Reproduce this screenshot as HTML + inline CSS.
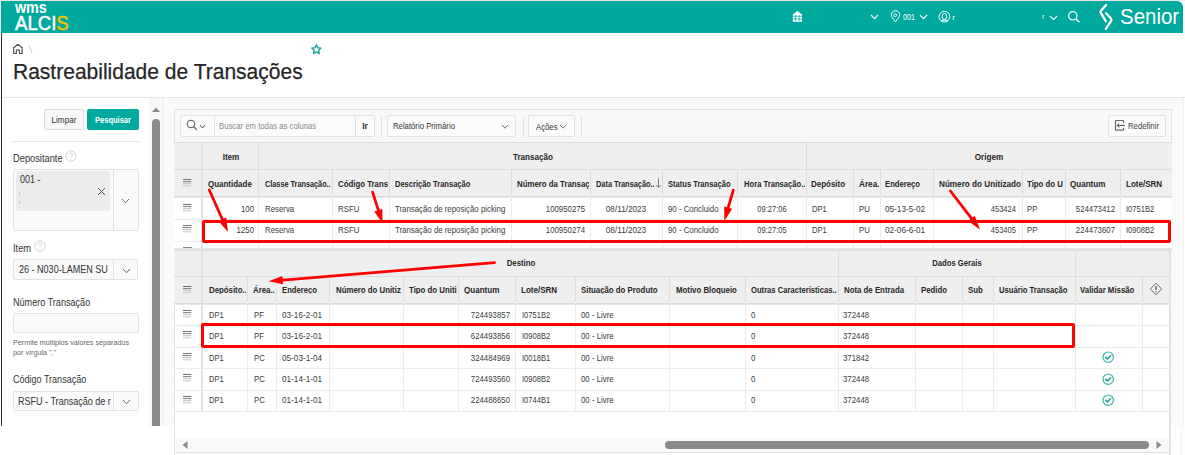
<!DOCTYPE html>
<html><head><meta charset="utf-8"><style>
html,body{margin:0;padding:0;}
body{width:1185px;height:455px;position:relative;overflow:hidden;background:#fff;font-family:"Liberation Sans", sans-serif;}
body>div, body>div>div{position:absolute;}
.t{position:absolute;white-space:nowrap;line-height:1;}
</style></head><body>
<div style="left:0px;top:0px;width:1185px;height:1px;background:#e8e8e8"></div>
<div style="left:1px;top:1px;width:1182px;height:32px;background:#00a99d;border-top-right-radius:6px"></div>
<div style="left:1px;top:33px;width:1px;height:393px;background:#2b2b2b"></div>
<div class="t" style="left:15.00px;top:-0.24px;font-size:16px;color:#fff;font-weight:bold;transform:scaleX(0.9);transform-origin:0 0;letter-spacing:-0.2px">wms</div>
<div class="t" style="left:14.70px;top:12.97px;font-size:20px;color:#fff;font-weight:normal;transform:scaleX(0.93);transform-origin:0 0;-webkit-text-stroke:0.5px #fff">ALCI<span style="color:#f6c200;-webkit-text-stroke:0.5px #f6c200">S</span></div>
<svg style="position:absolute;left:792px;top:10px;" width="11" height="12" viewBox="0 0 11 12"><path d="M5.4 1 L10 4.5 V11.7 H0.8 V4.5 Z" fill="#fff"/><path d="M0.8 6.3 H10 M0.8 9 H10 M3.6 5 V11 M7.2 5 V11" stroke="#00a99d" stroke-width="0.7"/></svg>
<svg style="position:absolute;left:869.5px;top:14.2px;" width="9" height="5.6" viewBox="0 0 9 5.6"><path d="M1 1 L4.5 4.6 L8 1" fill="none" stroke="#fff" stroke-width="1.1"/></svg>
<svg style="position:absolute;left:890px;top:10px;" width="11" height="13" viewBox="0 0 11 13"><path d="M5.5 11.8 C3 8.6 1.3 6.6 1.3 4.9 A4.2 4.2 0 0 1 9.7 4.9 C9.7 6.6 8 8.6 5.5 11.8 Z" fill="none" stroke="#fff" stroke-width="1"/><circle cx="5.3" cy="5.2" r="1.4" fill="none" stroke="#fff" stroke-width="0.9"/></svg>
<div class="t" style="left:903.00px;top:12.98px;font-size:9px;color:#fff;font-weight:normal;transform:scaleX(0.8);transform-origin:0 0;">001</div>
<svg style="position:absolute;left:918.5px;top:14.1px;" width="9" height="5.6" viewBox="0 0 9 5.6"><path d="M1 1 L4.5 4.6 L8 1" fill="none" stroke="#fff" stroke-width="1.1"/></svg>
<svg style="position:absolute;left:938px;top:10px;" width="13" height="14" viewBox="0 0 13 14"><circle cx="6.4" cy="6.7" r="5.4" fill="none" stroke="#fff" stroke-width="1"/><ellipse cx="6.4" cy="6.6" rx="2.3" ry="3.1" fill="none" stroke="#fff" stroke-width="1"/><path d="M3 11 Q6.4 9 9.8 11" fill="none" stroke="#fff" stroke-width="1"/></svg>
<div class="t" style="left:952.20px;top:13.53px;font-size:8px;color:#fff;font-weight:normal;transform:scaleX(1);transform-origin:0 0;">r</div>
<div class="t" style="left:1042.00px;top:13.23px;font-size:8px;color:#e8f4d0;font-weight:normal;transform:scaleX(1);transform-origin:0 0;">r</div>
<svg style="position:absolute;left:1049px;top:14.5px;" width="9" height="5.6" viewBox="0 0 9 5.6"><path d="M1 1 L4.5 4.6 L8 1" fill="none" stroke="#fff" stroke-width="1.1"/></svg>
<svg style="position:absolute;left:1067px;top:10px;" width="14" height="14" viewBox="0 0 14 14"><circle cx="5.8" cy="5.8" r="4.2" fill="none" stroke="#fff" stroke-width="1.2"/><path d="M8.8 8.8 L12.4 12.2" stroke="#fff" stroke-width="1.3"/></svg>
<svg style="position:absolute;left:1092px;top:0px;" width="33" height="33" viewBox="0 0 33 33"><path d="M14.1 4.9 L9 10.8 Q8 12 9 13.2 L13.8 21.2" fill="none" stroke="#fff" stroke-width="2.3" stroke-linecap="round" stroke-linejoin="round"/><path d="M14.1 13.2 L19 18.6 Q20 19.8 19 21 L13.8 28.8" fill="none" stroke="#fff" stroke-width="2.3" stroke-linecap="round" stroke-linejoin="round"/></svg>
<div class="t" style="left:1120.00px;top:6.38px;font-size:22px;color:#fff;font-weight:normal;transform:scaleX(0.93);transform-origin:0 0;">Senior</div>
<svg style="position:absolute;left:10px;top:42px;" width="16" height="14" viewBox="0 0 16 14"><path d="M3.1 6.3 L7.9 2.3 L12.7 6.3 M3.7 5.8 V11.5 H6.3 V8.7 Q6.3 7.8 7.9 7.8 Q9.5 7.8 9.5 8.7 V11.5 H12.1 V5.8" fill="none" stroke="#505050" stroke-width="1.15" stroke-linejoin="round"/></svg>
<svg style="position:absolute;left:27px;top:44px;" width="7" height="11" viewBox="0 0 7 11"><path d="M2 1.5 L5.1 9.1" stroke="#c8c8c8" stroke-width="0.9"/></svg>
<svg style="position:absolute;left:305px;top:40px;" width="22" height="20" viewBox="0 0 22 20"><path d="M11.40 4.70 L12.75 7.74 L16.06 8.09 L13.59 10.31 L14.28 13.56 L11.40 11.90 L8.52 13.56 L9.21 10.31 L6.74 8.09 L10.05 7.74 Z" fill="none" stroke="#1aa89b" stroke-width="1.4" stroke-linejoin="round"/></svg>
<div class="t" style="left:13.40px;top:60.68px;font-size:22px;color:#262626;font-weight:normal;transform:scaleX(0.955);transform-origin:0 0;-webkit-text-stroke:0.25px #262626">Rastreabilidade de Transações</div>
<div style="left:2px;top:97px;width:1183px;height:1px;background:#e6e6e6"></div>
<div style="left:44px;top:109px;width:40px;height:21px;background:#f7f7f7;border:1px solid #dcdcdc;box-sizing:border-box;border-radius:2px"></div>
<div class="t" style="left:-936.00px;width:2000px;text-align:center;top:115.46px;font-size:9.5px;color:#333;font-weight:normal;transform:scaleX(0.86);transform-origin:50% 0;">Limpar</div>
<div style="left:87px;top:109px;width:51.5px;height:21px;background:#00a99d;border-radius:2px"></div>
<div class="t" style="left:-887.10px;width:2000px;text-align:center;top:115.26px;font-size:9.5px;color:#fff;font-weight:bold;transform:scaleX(0.79);transform-origin:50% 0;">Pesquisar</div>
<div style="left:12.5px;top:141px;width:126.0px;height:1px;background:#e4e4e4"></div>
<div class="t" style="left:13.00px;top:152.69px;font-size:11px;color:#333;font-weight:normal;transform:scaleX(0.845);transform-origin:0 0;">Depositante</div>
<svg style="position:absolute;left:64.5px;top:149.5px;" width="12" height="12" viewBox="0 0 12 12"><circle cx="6" cy="6" r="5.2" fill="none" stroke="#cfcfcf" stroke-width="0.9"/><path d="M4.4 4.6 Q4.5 3 6 3 Q7.6 3 7.6 4.5 Q7.6 5.4 6.5 6 Q6 6.3 6 7.3" fill="none" stroke="#cfcfcf" stroke-width="0.9"/><circle cx="6" cy="9" r="0.6" fill="#cfcfcf"/></svg>
<div style="left:13px;top:169px;width:125.5px;height:62px;background:#fafafa;border:1px solid #e2e2e2;box-sizing:border-box;border-radius:2px"></div>
<div style="left:16px;top:171px;width:94px;height:39.5px;background:#ececec;border-radius:2px"></div>
<div style="left:112.5px;top:170px;width:1px;height:60px;background:#e2e2e2"></div>
<div class="t" style="left:19.80px;top:173.61px;font-size:10.5px;color:#333;font-weight:normal;transform:scaleX(0.86);transform-origin:0 0;">001 -</div>
<svg style="position:absolute;left:97px;top:187px;" width="9" height="9" viewBox="0 0 9 9"><path d="M1 1 L8 8 M8 1 L1 8" stroke="#555" stroke-width="1"/></svg>
<svg style="position:absolute;left:121px;top:197.5px;" width="9" height="5.8" viewBox="0 0 9 5.8"><path d="M1 1 L4.5 4.8 L8 1" fill="none" stroke="#666" stroke-width="1"/></svg>
<div style="left:19px;top:192px;width:1px;height:3px;background:#f0c080"></div>
<div style="left:19px;top:201px;width:1px;height:3px;background:#f0c080"></div>
<div class="t" style="left:12.70px;top:242.69px;font-size:11px;color:#333;font-weight:normal;transform:scaleX(0.845);transform-origin:0 0;">Item</div>
<svg style="position:absolute;left:34px;top:239.5px;" width="12" height="12" viewBox="0 0 12 12"><circle cx="6" cy="6" r="5.2" fill="none" stroke="#cfcfcf" stroke-width="0.9"/><path d="M4.4 4.6 Q4.5 3 6 3 Q7.6 3 7.6 4.5 Q7.6 5.4 6.5 6 Q6 6.3 6 7.3" fill="none" stroke="#cfcfcf" stroke-width="0.9"/><circle cx="6" cy="9" r="0.6" fill="#cfcfcf"/></svg>
<div style="left:12.7px;top:259.3px;width:125.5px;height:20.5px;background:#fafafa;border:1px solid #e2e2e2;box-sizing:border-box;border-radius:2px"></div>
<div style="left:112.5px;top:260px;width:1px;height:19px;background:#e2e2e2"></div>
<div class="t" style="left:18.70px;top:264.41px;font-size:10.5px;color:#333;font-weight:normal;transform:scaleX(0.86);transform-origin:0 0;">26 - N030-LAMEN SU</div>
<svg style="position:absolute;left:121.5px;top:267.5px;" width="9" height="5.8" viewBox="0 0 9 5.8"><path d="M1 1 L4.5 4.8 L8 1" fill="none" stroke="#666" stroke-width="1"/></svg>
<div class="t" style="left:12.70px;top:296.69px;font-size:11px;color:#333;font-weight:normal;transform:scaleX(0.825);transform-origin:0 0;">Número Transação</div>
<div style="left:12.6px;top:312.6px;width:126px;height:20.7px;background:#fafafa;border:1px solid #e2e2e2;box-sizing:border-box;border-radius:2px"></div>
<div class="t" style="left:12.60px;top:338.73px;font-size:8px;color:#666;font-weight:normal;transform:scaleX(0.9);transform-origin:0 0;">Permite múltiplos valores separados</div>
<div class="t" style="left:12.60px;top:348.83px;font-size:8px;color:#666;font-weight:normal;transform:scaleX(0.9);transform-origin:0 0;">por vírgula ","</div>
<div class="t" style="left:12.60px;top:374.09px;font-size:11px;color:#333;font-weight:normal;transform:scaleX(0.82);transform-origin:0 0;">Código Transação</div>
<div style="left:12.6px;top:390.5px;width:126px;height:20.7px;background:#fafafa;border:1px solid #e2e2e2;box-sizing:border-box;border-radius:2px"></div>
<div style="left:112.5px;top:391px;width:1px;height:19.5px;background:#e2e2e2"></div>
<div class="t" style="left:18.20px;top:395.61px;font-size:10.5px;color:#333;font-weight:normal;transform:scaleX(0.86);transform-origin:0 0;">RSFU - Transação de r</div>
<svg style="position:absolute;left:121.5px;top:398.5px;" width="9" height="5.8" viewBox="0 0 9 5.8"><path d="M1 1 L4.5 4.8 L8 1" fill="none" stroke="#666" stroke-width="1"/></svg>
<div style="left:149px;top:98px;width:14px;height:328px;background:#f7f7f7"></div>
<svg style="position:absolute;left:151px;top:106px;" width="10" height="7" viewBox="0 0 10 7"><path d="M1 6 L5 1.5 L9 6 Z" fill="#8a8a8a"/></svg>
<div style="left:152px;top:118.6px;width:8px;height:307.4px;background:#8a8a8a;border-radius:4px 4px 0 0"></div>
<div style="left:163px;top:98px;width:1px;height:328px;background:#ececec"></div>
<div style="left:164px;top:98px;width:1019px;height:328px;background:#fafafa"></div>
<div style="left:1183px;top:98px;width:1px;height:328px;background:#f1f1f1"></div>
<div style="left:1170px;top:426px;width:15px;height:29px;background:#fdfdfd"></div>
<div style="left:1181px;top:426px;width:1px;height:29px;background:#f3f3f3"></div>
<div style="left:174px;top:109px;width:998px;height:140px;background:#f8f8f8;border:1px solid #e4e4e4;border-bottom:none;box-sizing:border-box"></div>
<div style="left:174px;top:249px;width:1px;height:206px;background:#e4e4e4"></div>
<div style="left:180px;top:115px;width:195px;height:21.5px;background:#fbfbfb;border:1px solid #e2e2e2;box-sizing:border-box;border-radius:2px"></div>
<div style="left:214px;top:116px;width:1px;height:19.5px;background:#e2e2e2"></div>
<div style="left:355px;top:116px;width:1px;height:19.5px;background:#e2e2e2"></div>
<svg style="position:absolute;left:186px;top:119px;" width="12" height="13" viewBox="0 0 12 13"><circle cx="5" cy="5" r="3.8" fill="none" stroke="#555" stroke-width="1"/><path d="M7.7 7.7 L10.8 10.8" stroke="#555" stroke-width="1.1"/></svg>
<svg style="position:absolute;left:199px;top:124px;" width="7" height="5" viewBox="0 0 7 5"><path d="M1 1 L3.5 4 L6 1" fill="none" stroke="#555" stroke-width="1"/></svg>
<div class="t" style="left:218.50px;top:122.28px;font-size:9px;color:#8a8a8a;font-weight:normal;transform:scaleX(0.86);transform-origin:0 0;">Buscar em todas as colunas</div>
<div class="t" style="left:-635.00px;width:2000px;text-align:center;top:121.46px;font-size:9.5px;color:#333;font-weight:bold;transform:scaleX(0.9);transform-origin:50% 0;">Ir</div>
<div style="left:381px;top:116px;width:1px;height:20px;background:#e2e2e2"></div>
<div style="left:387.3px;top:115px;width:128.7px;height:21.5px;background:#fbfbfb;border:1px solid #e2e2e2;box-sizing:border-box;border-radius:2px"></div>
<div class="t" style="left:393.00px;top:122.28px;font-size:9px;color:#333;font-weight:normal;transform:scaleX(0.86);transform-origin:0 0;">Relatório Primário</div>
<svg style="position:absolute;left:501px;top:124px;" width="8" height="5.2" viewBox="0 0 8 5.2"><path d="M1 1 L4.0 4.2 L7 1" fill="none" stroke="#666" stroke-width="1"/></svg>
<div style="left:522.5px;top:116px;width:1px;height:20px;background:#e2e2e2"></div>
<div style="left:528px;top:115px;width:47px;height:21.5px;background:#fbfbfb;border:1px solid #e2e2e2;box-sizing:border-box;border-radius:2px"></div>
<div class="t" style="left:536.00px;top:122.58px;font-size:9px;color:#333;font-weight:normal;transform:scaleX(0.86);transform-origin:0 0;">Ações</div>
<svg style="position:absolute;left:558.5px;top:124.3px;" width="8" height="5.2" viewBox="0 0 8 5.2"><path d="M1 1 L4.0 4.2 L7 1" fill="none" stroke="#666" stroke-width="0.9"/></svg>
<div style="left:581px;top:116px;width:1px;height:20px;background:#e2e2e2"></div>
<div style="left:1108px;top:115px;width:58px;height:21.599999999999994px;background:#fbfbfb;border:1px solid #e2e2e2;box-sizing:border-box;border-radius:2px"></div>
<svg style="position:absolute;left:1114px;top:119px;" width="12" height="13" viewBox="0 0 12 13"><path d="M9.6 3.8 V2.2 Q9.6 1.5 8.9 1.5 H2.1 Q1.5 1.5 1.5 2.2 V10.5 Q1.5 11.2 2.1 11.2 H8.9 Q9.6 11.2 9.6 10.5 V8.8" fill="none" stroke="#666" stroke-width="1.2"/><path d="M3.2 6.4 H10.8 M5.3 4.3 L3.2 6.4 L5.3 8.5" fill="none" stroke="#444" stroke-width="1"/></svg>
<div class="t" style="left:1127.50px;top:122.08px;font-size:9px;color:#444;font-weight:normal;transform:scaleX(0.86);transform-origin:0 0;">Redefinir</div>
<div style="left:174px;top:142px;width:998px;height:106px;background:#fff"></div>
<div style="left:174px;top:142px;width:998px;height:1px;background:#dcdcdc"></div>
<div style="left:174px;top:143px;width:998px;height:53px;background:#efefef"></div>
<div style="left:201px;top:143px;width:2px;height:105px;background:#e2e2e2"></div>
<div style="left:174px;top:169px;width:998px;height:1px;background:#dddddd"></div>
<div style="left:174px;top:196px;width:998px;height:1px;background:#dadada"></div>
<div style="left:174px;top:197px;width:998px;height:1px;background:#e6e6e6"></div>
<div style="left:174px;top:219px;width:998px;height:1px;background:#ececec"></div>
<div style="left:174px;top:240.5px;width:998px;height:1px;background:#ececec"></div>
<div style="left:258.3px;top:143px;width:1px;height:26px;background:#dddddd"></div>
<div style="left:806px;top:143px;width:1px;height:26px;background:#dddddd"></div>
<div style="left:258.3px;top:169px;width:1px;height:27px;background:#dddddd"></div>
<div style="left:258.3px;top:196px;width:1px;height:52px;background:#ececec"></div>
<div style="left:332px;top:169px;width:1px;height:27px;background:#dddddd"></div>
<div style="left:332px;top:196px;width:1px;height:52px;background:#ececec"></div>
<div style="left:388.5px;top:169px;width:1px;height:27px;background:#dddddd"></div>
<div style="left:388.5px;top:196px;width:1px;height:52px;background:#ececec"></div>
<div style="left:510.5px;top:169px;width:1px;height:27px;background:#dddddd"></div>
<div style="left:510.5px;top:196px;width:1px;height:52px;background:#ececec"></div>
<div style="left:590px;top:169px;width:1px;height:27px;background:#dddddd"></div>
<div style="left:590px;top:196px;width:1px;height:52px;background:#ececec"></div>
<div style="left:661.5px;top:169px;width:1px;height:27px;background:#dddddd"></div>
<div style="left:661.5px;top:196px;width:1px;height:52px;background:#ececec"></div>
<div style="left:737px;top:169px;width:1px;height:27px;background:#dddddd"></div>
<div style="left:737px;top:196px;width:1px;height:52px;background:#ececec"></div>
<div style="left:806px;top:169px;width:1px;height:27px;background:#dddddd"></div>
<div style="left:806px;top:196px;width:1px;height:52px;background:#ececec"></div>
<div style="left:853px;top:169px;width:1px;height:27px;background:#dddddd"></div>
<div style="left:853px;top:196px;width:1px;height:52px;background:#ececec"></div>
<div style="left:880px;top:169px;width:1px;height:27px;background:#dddddd"></div>
<div style="left:880px;top:196px;width:1px;height:52px;background:#ececec"></div>
<div style="left:933px;top:169px;width:1px;height:27px;background:#dddddd"></div>
<div style="left:933px;top:196px;width:1px;height:52px;background:#ececec"></div>
<div style="left:1022px;top:169px;width:1px;height:27px;background:#dddddd"></div>
<div style="left:1022px;top:196px;width:1px;height:52px;background:#ececec"></div>
<div style="left:1065px;top:169px;width:1px;height:27px;background:#dddddd"></div>
<div style="left:1065px;top:196px;width:1px;height:52px;background:#ececec"></div>
<div style="left:1120px;top:169px;width:1px;height:27px;background:#dddddd"></div>
<div style="left:1120px;top:196px;width:1px;height:52px;background:#ececec"></div>
<div class="t" style="left:-769.00px;width:2000px;text-align:center;top:152.98px;font-size:9px;color:#262626;font-weight:bold;transform:scaleX(0.9);transform-origin:50% 0;">Item</div>
<div class="t" style="left:-467.50px;width:2000px;text-align:center;top:152.98px;font-size:9px;color:#262626;font-weight:bold;transform:scaleX(0.9);transform-origin:50% 0;">Transação</div>
<div class="t" style="left:-11.00px;width:2000px;text-align:center;top:152.98px;font-size:9px;color:#262626;font-weight:bold;transform:scaleX(0.9);transform-origin:50% 0;">Origem</div>
<svg style="position:absolute;left:183px;top:179.0px;" width="9" height="8" viewBox="0 0 9 8"><rect x="0" y="0.0" width="8.3" height="1" fill="#6f6f6f"/><rect x="0" y="2.1" width="8.3" height="1" fill="#7a7a7a"/><rect x="0" y="4.2" width="8.3" height="1" fill="#bdbdbd"/><rect x="0" y="6.3" width="8.3" height="1" fill="#c8c8c8"/></svg>
<div style="left:203px;top:175.98px;width:54.30px;height:12.60px;overflow:hidden">
<div class="t" style="left:4.50px;top:4.00px;font-size:9px;color:#262626;font-weight:bold;transform:scaleX(0.885);transform-origin:0 0;">Quantidade</div>
</div>
<div style="left:258.3px;top:175.98px;width:72.70px;height:12.60px;overflow:hidden">
<div class="t" style="left:6.70px;top:4.00px;font-size:9px;color:#262626;font-weight:bold;transform:scaleX(0.81);transform-origin:0 0;">Classe Transação..</div>
</div>
<div style="left:332px;top:175.98px;width:55.50px;height:12.60px;overflow:hidden">
<div class="t" style="left:5.70px;top:4.00px;font-size:9px;color:#262626;font-weight:bold;transform:scaleX(0.87);transform-origin:0 0;">Código Trans</div>
</div>
<div style="left:388.5px;top:175.98px;width:121.00px;height:12.60px;overflow:hidden">
<div class="t" style="left:6.00px;top:4.00px;font-size:9px;color:#262626;font-weight:bold;transform:scaleX(0.836);transform-origin:0 0;">Descrição Transação</div>
</div>
<div style="left:510.5px;top:175.98px;width:78.50px;height:12.60px;overflow:hidden">
<div class="t" style="left:6.30px;top:4.00px;font-size:9px;color:#262626;font-weight:bold;transform:scaleX(0.87);transform-origin:0 0;">Número da Transaç</div>
</div>
<div style="left:590px;top:175.98px;width:70.50px;height:12.60px;overflow:hidden">
<div class="t" style="left:6.00px;top:4.00px;font-size:9px;color:#262626;font-weight:bold;transform:scaleX(0.82);transform-origin:0 0;">Data Transação..</div>
</div>
<div style="left:661.5px;top:175.98px;width:74.50px;height:12.60px;overflow:hidden">
<div class="t" style="left:6.00px;top:4.00px;font-size:9px;color:#262626;font-weight:bold;transform:scaleX(0.84);transform-origin:0 0;">Status Transação</div>
</div>
<div style="left:737px;top:175.98px;width:68.00px;height:12.60px;overflow:hidden">
<div class="t" style="left:6.60px;top:4.00px;font-size:9px;color:#262626;font-weight:bold;transform:scaleX(0.847);transform-origin:0 0;">Hora Transação..</div>
</div>
<div style="left:806px;top:175.98px;width:46.00px;height:12.60px;overflow:hidden">
<div class="t" style="left:5.40px;top:4.00px;font-size:9px;color:#262626;font-weight:bold;transform:scaleX(0.886);transform-origin:0 0;">Depósito</div>
</div>
<div style="left:853px;top:175.98px;width:26.00px;height:12.60px;overflow:hidden">
<div class="t" style="left:5.50px;top:4.00px;font-size:9px;color:#262626;font-weight:bold;transform:scaleX(0.91);transform-origin:0 0;">Área.</div>
</div>
<div style="left:880px;top:175.98px;width:52.00px;height:12.60px;overflow:hidden">
<div class="t" style="left:5.00px;top:4.00px;font-size:9px;color:#262626;font-weight:bold;transform:scaleX(0.854);transform-origin:0 0;">Endereço</div>
</div>
<div style="left:933px;top:175.98px;width:88.00px;height:12.60px;overflow:hidden">
<div class="t" style="left:6.00px;top:4.00px;font-size:9px;color:#262626;font-weight:bold;transform:scaleX(0.906);transform-origin:0 0;">Número do Unitizado</div>
</div>
<div style="left:1022px;top:175.98px;width:42.00px;height:12.60px;overflow:hidden">
<div class="t" style="left:5.40px;top:4.00px;font-size:9px;color:#262626;font-weight:bold;transform:scaleX(0.87);transform-origin:0 0;">Tipo do U</div>
</div>
<div style="left:1065px;top:175.98px;width:54.00px;height:12.60px;overflow:hidden">
<div class="t" style="left:5.00px;top:4.00px;font-size:9px;color:#262626;font-weight:bold;transform:scaleX(0.896);transform-origin:0 0;">Quantum</div>
</div>
<div style="left:1120px;top:175.98px;width:51.00px;height:12.60px;overflow:hidden">
<div class="t" style="left:5.90px;top:4.00px;font-size:9px;color:#262626;font-weight:bold;transform:scaleX(0.893);transform-origin:0 0;">Lote/SRN</div>
</div>
<svg style="position:absolute;left:183px;top:203.8px;" width="9" height="8" viewBox="0 0 9 8"><rect x="0" y="0.0" width="8.3" height="1" fill="#6f6f6f"/><rect x="0" y="2.1" width="8.3" height="1" fill="#7a7a7a"/><rect x="0" y="4.2" width="8.3" height="1" fill="#bdbdbd"/><rect x="0" y="6.3" width="8.3" height="1" fill="#c8c8c8"/></svg>
<div class="t" style="left:-1746.50px;width:2000px;text-align:right;top:204.68px;font-size:9px;color:#3b3b3b;font-weight:normal;transform:scaleX(0.87);transform-origin:100% 0;">100</div>
<div class="t" style="left:265.00px;top:204.68px;font-size:9px;color:#3b3b3b;font-weight:normal;transform:scaleX(0.87);transform-origin:0 0;">Reserva</div>
<div class="t" style="left:338.00px;top:204.68px;font-size:9px;color:#3b3b3b;font-weight:normal;transform:scaleX(0.87);transform-origin:0 0;">RSFU</div>
<div class="t" style="left:394.50px;top:204.68px;font-size:9px;color:#3b3b3b;font-weight:normal;transform:scaleX(0.87);transform-origin:0 0;">Transação de reposição picking</div>
<div class="t" style="left:-1415.50px;width:2000px;text-align:right;top:204.68px;font-size:9px;color:#3b3b3b;font-weight:normal;transform:scaleX(0.87);transform-origin:100% 0;">100950275</div>
<div class="t" style="left:-374.00px;width:2000px;text-align:center;top:204.68px;font-size:9px;color:#3b3b3b;font-weight:normal;transform:scaleX(0.91);transform-origin:50% 0;">08/11/2023</div>
<div class="t" style="left:667.50px;top:204.68px;font-size:9px;color:#3b3b3b;font-weight:normal;transform:scaleX(0.87);transform-origin:0 0;">90 - Concluido</div>
<div class="t" style="left:-228.30px;width:2000px;text-align:center;top:204.68px;font-size:9px;color:#3b3b3b;font-weight:normal;transform:scaleX(0.84);transform-origin:50% 0;">09:27:06</div>
<div class="t" style="left:811.50px;top:204.68px;font-size:9px;color:#3b3b3b;font-weight:normal;transform:scaleX(0.84);transform-origin:0 0;">DP1</div>
<div class="t" style="left:858.50px;top:204.68px;font-size:9px;color:#3b3b3b;font-weight:normal;transform:scaleX(0.87);transform-origin:0 0;">PU</div>
<div class="t" style="left:885.00px;top:204.68px;font-size:9px;color:#3b3b3b;font-weight:normal;transform:scaleX(0.91);transform-origin:0 0;">05-13-5-02</div>
<div class="t" style="left:-984.50px;width:2000px;text-align:right;top:204.68px;font-size:9px;color:#3b3b3b;font-weight:normal;transform:scaleX(0.84);transform-origin:100% 0;">453424</div>
<div class="t" style="left:1027.40px;top:204.68px;font-size:9px;color:#3b3b3b;font-weight:normal;transform:scaleX(0.87);transform-origin:0 0;">PP</div>
<div class="t" style="left:-885.50px;width:2000px;text-align:right;top:204.68px;font-size:9px;color:#3b3b3b;font-weight:normal;transform:scaleX(0.87);transform-origin:100% 0;">524473412</div>
<div class="t" style="left:1126.00px;top:204.68px;font-size:9px;color:#3b3b3b;font-weight:normal;transform:scaleX(0.84);transform-origin:0 0;">I0751B2</div>
<svg style="position:absolute;left:183px;top:224.7px;" width="9" height="8" viewBox="0 0 9 8"><rect x="0" y="0.0" width="8.3" height="1" fill="#6f6f6f"/><rect x="0" y="2.1" width="8.3" height="1" fill="#7a7a7a"/><rect x="0" y="4.2" width="8.3" height="1" fill="#bdbdbd"/><rect x="0" y="6.3" width="8.3" height="1" fill="#c8c8c8"/></svg>
<div class="t" style="left:-1746.50px;width:2000px;text-align:right;top:225.58px;font-size:9px;color:#3b3b3b;font-weight:normal;transform:scaleX(0.87);transform-origin:100% 0;">1250</div>
<div class="t" style="left:265.00px;top:225.58px;font-size:9px;color:#3b3b3b;font-weight:normal;transform:scaleX(0.87);transform-origin:0 0;">Reserva</div>
<div class="t" style="left:338.00px;top:225.58px;font-size:9px;color:#3b3b3b;font-weight:normal;transform:scaleX(0.87);transform-origin:0 0;">RSFU</div>
<div class="t" style="left:394.50px;top:225.58px;font-size:9px;color:#3b3b3b;font-weight:normal;transform:scaleX(0.87);transform-origin:0 0;">Transação de reposição picking</div>
<div class="t" style="left:-1415.50px;width:2000px;text-align:right;top:225.58px;font-size:9px;color:#3b3b3b;font-weight:normal;transform:scaleX(0.87);transform-origin:100% 0;">100950274</div>
<div class="t" style="left:-374.00px;width:2000px;text-align:center;top:225.58px;font-size:9px;color:#3b3b3b;font-weight:normal;transform:scaleX(0.91);transform-origin:50% 0;">08/11/2023</div>
<div class="t" style="left:667.50px;top:225.58px;font-size:9px;color:#3b3b3b;font-weight:normal;transform:scaleX(0.87);transform-origin:0 0;">90 - Concluido</div>
<div class="t" style="left:-228.30px;width:2000px;text-align:center;top:225.58px;font-size:9px;color:#3b3b3b;font-weight:normal;transform:scaleX(0.84);transform-origin:50% 0;">09:27:05</div>
<div class="t" style="left:811.50px;top:225.58px;font-size:9px;color:#3b3b3b;font-weight:normal;transform:scaleX(0.84);transform-origin:0 0;">DP1</div>
<div class="t" style="left:858.50px;top:225.58px;font-size:9px;color:#3b3b3b;font-weight:normal;transform:scaleX(0.87);transform-origin:0 0;">PU</div>
<div class="t" style="left:885.00px;top:225.58px;font-size:9px;color:#3b3b3b;font-weight:normal;transform:scaleX(0.91);transform-origin:0 0;">02-06-6-01</div>
<div class="t" style="left:-984.50px;width:2000px;text-align:right;top:225.58px;font-size:9px;color:#3b3b3b;font-weight:normal;transform:scaleX(0.84);transform-origin:100% 0;">453405</div>
<div class="t" style="left:1027.40px;top:225.58px;font-size:9px;color:#3b3b3b;font-weight:normal;transform:scaleX(0.87);transform-origin:0 0;">PP</div>
<div class="t" style="left:-885.50px;width:2000px;text-align:right;top:225.58px;font-size:9px;color:#3b3b3b;font-weight:normal;transform:scaleX(0.87);transform-origin:100% 0;">224473607</div>
<div class="t" style="left:1126.00px;top:225.58px;font-size:9px;color:#3b3b3b;font-weight:normal;transform:scaleX(0.84);transform-origin:0 0;">I0908B2</div>
<svg style="position:absolute;left:654.7px;top:178px;" width="7" height="11" viewBox="0 0 7 11"><path d="M3.5 0.5 V9.3 M1.2 7 L3.5 9.4 L5.8 7" fill="none" stroke="#707070" stroke-width="0.9"/></svg>
<div style="left:183px;top:247px;width:8.5px;height:1px;background:#8d8d8d"></div>
<div style="left:174px;top:248px;width:998px;height:2.5px;background:#e4e4e4"></div>
<div style="left:175px;top:250px;width:994px;height:202px;background:#fff"></div>
<div style="left:174px;top:250px;width:995px;height:52.5px;background:#efefef"></div>
<div style="left:174px;top:250px;width:995px;height:1px;background:#dcdcdc"></div>
<div style="left:201px;top:250px;width:2px;height:161px;background:#e2e2e2"></div>
<div style="left:174px;top:275.6px;width:995px;height:1px;background:#dddddd"></div>
<div style="left:174px;top:302.5px;width:995px;height:1px;background:#dadada"></div>
<div style="left:174px;top:303.5px;width:995px;height:1px;background:#e6e6e6"></div>
<div style="left:174px;top:325px;width:995px;height:1px;background:#ececec"></div>
<div style="left:174px;top:346.5px;width:995px;height:1px;background:#ececec"></div>
<div style="left:174px;top:368px;width:995px;height:1px;background:#ececec"></div>
<div style="left:174px;top:389.5px;width:995px;height:1px;background:#ececec"></div>
<div style="left:174px;top:411px;width:995px;height:1px;background:#ececec"></div>
<div style="left:837.6px;top:250px;width:1px;height:25.600000000000023px;background:#dddddd"></div>
<div style="left:1074.7px;top:250px;width:1px;height:25.600000000000023px;background:#dddddd"></div>
<div style="left:247.4px;top:275.6px;width:1px;height:26.899999999999977px;background:#dddddd"></div>
<div style="left:247.4px;top:302.5px;width:1px;height:108.5px;background:#ececec"></div>
<div style="left:275.8px;top:275.6px;width:1px;height:26.899999999999977px;background:#dddddd"></div>
<div style="left:275.8px;top:302.5px;width:1px;height:108.5px;background:#ececec"></div>
<div style="left:329.2px;top:275.6px;width:1px;height:26.899999999999977px;background:#dddddd"></div>
<div style="left:329.2px;top:302.5px;width:1px;height:108.5px;background:#ececec"></div>
<div style="left:402.6px;top:275.6px;width:1px;height:26.899999999999977px;background:#dddddd"></div>
<div style="left:402.6px;top:302.5px;width:1px;height:108.5px;background:#ececec"></div>
<div style="left:457.7px;top:275.6px;width:1px;height:26.899999999999977px;background:#dddddd"></div>
<div style="left:457.7px;top:302.5px;width:1px;height:108.5px;background:#ececec"></div>
<div style="left:514.7px;top:275.6px;width:1px;height:26.899999999999977px;background:#dddddd"></div>
<div style="left:514.7px;top:302.5px;width:1px;height:108.5px;background:#ececec"></div>
<div style="left:575.3px;top:275.6px;width:1px;height:26.899999999999977px;background:#dddddd"></div>
<div style="left:575.3px;top:302.5px;width:1px;height:108.5px;background:#ececec"></div>
<div style="left:669px;top:275.6px;width:1px;height:26.899999999999977px;background:#dddddd"></div>
<div style="left:669px;top:302.5px;width:1px;height:108.5px;background:#ececec"></div>
<div style="left:744.5px;top:275.6px;width:1px;height:26.899999999999977px;background:#dddddd"></div>
<div style="left:744.5px;top:302.5px;width:1px;height:108.5px;background:#ececec"></div>
<div style="left:837.6px;top:275.6px;width:1px;height:26.899999999999977px;background:#dddddd"></div>
<div style="left:837.6px;top:302.5px;width:1px;height:108.5px;background:#ececec"></div>
<div style="left:915px;top:275.6px;width:1px;height:26.899999999999977px;background:#dddddd"></div>
<div style="left:915px;top:302.5px;width:1px;height:108.5px;background:#ececec"></div>
<div style="left:962.3px;top:275.6px;width:1px;height:26.899999999999977px;background:#dddddd"></div>
<div style="left:962.3px;top:302.5px;width:1px;height:108.5px;background:#ececec"></div>
<div style="left:993.4px;top:275.6px;width:1px;height:26.899999999999977px;background:#dddddd"></div>
<div style="left:993.4px;top:302.5px;width:1px;height:108.5px;background:#ececec"></div>
<div style="left:1074.7px;top:275.6px;width:1px;height:26.899999999999977px;background:#dddddd"></div>
<div style="left:1074.7px;top:302.5px;width:1px;height:108.5px;background:#ececec"></div>
<div style="left:1142.2px;top:275.6px;width:1px;height:26.899999999999977px;background:#dddddd"></div>
<div style="left:1142.2px;top:302.5px;width:1px;height:108.5px;background:#ececec"></div>
<div style="left:1169px;top:250px;width:1.6px;height:205px;background:#e2e2e2"></div>
<div class="t" style="left:-479.50px;width:2000px;text-align:center;top:259.48px;font-size:9px;color:#262626;font-weight:bold;transform:scaleX(0.87);transform-origin:50% 0;">Destino</div>
<div class="t" style="left:-43.50px;width:2000px;text-align:center;top:259.38px;font-size:9px;color:#262626;font-weight:bold;transform:scaleX(0.85);transform-origin:50% 0;">Dados Gerais</div>
<svg style="position:absolute;left:183px;top:285.5px;" width="9" height="8" viewBox="0 0 9 8"><rect x="0" y="0.0" width="8.3" height="1" fill="#6f6f6f"/><rect x="0" y="2.1" width="8.3" height="1" fill="#7a7a7a"/><rect x="0" y="4.2" width="8.3" height="1" fill="#bdbdbd"/><rect x="0" y="6.3" width="8.3" height="1" fill="#c8c8c8"/></svg>
<div style="left:203px;top:281.88px;width:43.40px;height:12.60px;overflow:hidden">
<div class="t" style="left:5.50px;top:4.00px;font-size:9px;color:#262626;font-weight:bold;transform:scaleX(0.87);transform-origin:0 0;">Depósito..</div>
</div>
<div style="left:247.4px;top:281.88px;width:27.40px;height:12.60px;overflow:hidden">
<div class="t" style="left:6.10px;top:4.00px;font-size:9px;color:#262626;font-weight:bold;transform:scaleX(0.87);transform-origin:0 0;">Área..</div>
</div>
<div style="left:275.8px;top:281.88px;width:52.40px;height:12.60px;overflow:hidden">
<div class="t" style="left:6.00px;top:4.00px;font-size:9px;color:#262626;font-weight:bold;transform:scaleX(0.854);transform-origin:0 0;">Endereço</div>
</div>
<div style="left:329.2px;top:281.88px;width:72.40px;height:12.60px;overflow:hidden">
<div class="t" style="left:6.80px;top:4.00px;font-size:9px;color:#262626;font-weight:bold;transform:scaleX(0.87);transform-origin:0 0;">Número do Unitiz</div>
</div>
<div style="left:402.6px;top:281.88px;width:54.10px;height:12.60px;overflow:hidden">
<div class="t" style="left:6.40px;top:4.00px;font-size:9px;color:#262626;font-weight:bold;transform:scaleX(0.87);transform-origin:0 0;">Tipo do Uniti</div>
</div>
<div style="left:457.7px;top:281.88px;width:56.00px;height:12.60px;overflow:hidden">
<div class="t" style="left:6.30px;top:4.00px;font-size:9px;color:#262626;font-weight:bold;transform:scaleX(0.896);transform-origin:0 0;">Quantum</div>
</div>
<div style="left:514.7px;top:281.88px;width:59.60px;height:12.60px;overflow:hidden">
<div class="t" style="left:6.60px;top:4.00px;font-size:9px;color:#262626;font-weight:bold;transform:scaleX(0.893);transform-origin:0 0;">Lote/SRN</div>
</div>
<div style="left:575.3px;top:281.88px;width:92.70px;height:12.60px;overflow:hidden">
<div class="t" style="left:5.90px;top:4.00px;font-size:9px;color:#262626;font-weight:bold;transform:scaleX(0.87);transform-origin:0 0;">Situação do Produto</div>
</div>
<div style="left:669px;top:281.88px;width:74.50px;height:12.60px;overflow:hidden">
<div class="t" style="left:6.70px;top:4.00px;font-size:9px;color:#262626;font-weight:bold;transform:scaleX(0.87);transform-origin:0 0;">Motivo Bloqueio</div>
</div>
<div style="left:744.5px;top:281.88px;width:92.10px;height:12.60px;overflow:hidden">
<div class="t" style="left:6.50px;top:4.00px;font-size:9px;color:#262626;font-weight:bold;transform:scaleX(0.848);transform-origin:0 0;">Outras Características..</div>
</div>
<div style="left:837.6px;top:281.88px;width:76.40px;height:12.60px;overflow:hidden">
<div class="t" style="left:6.10px;top:4.00px;font-size:9px;color:#262626;font-weight:bold;transform:scaleX(0.87);transform-origin:0 0;">Nota de Entrada</div>
</div>
<div style="left:915px;top:281.88px;width:46.30px;height:12.60px;overflow:hidden">
<div class="t" style="left:6.00px;top:4.00px;font-size:9px;color:#262626;font-weight:bold;transform:scaleX(0.87);transform-origin:0 0;">Pedido</div>
</div>
<div style="left:962.3px;top:281.88px;width:30.10px;height:12.60px;overflow:hidden">
<div class="t" style="left:6.10px;top:4.00px;font-size:9px;color:#262626;font-weight:bold;transform:scaleX(0.87);transform-origin:0 0;">Sub</div>
</div>
<div style="left:993.4px;top:281.88px;width:80.30px;height:12.60px;overflow:hidden">
<div class="t" style="left:5.20px;top:4.00px;font-size:9px;color:#262626;font-weight:bold;transform:scaleX(0.85);transform-origin:0 0;">Usuário Transação</div>
</div>
<div style="left:1074.7px;top:281.88px;width:66.50px;height:12.60px;overflow:hidden">
<div class="t" style="left:4.90px;top:4.00px;font-size:9px;color:#262626;font-weight:bold;transform:scaleX(0.87);transform-origin:0 0;">Validar Missão</div>
</div>
<svg style="position:absolute;left:1148.8px;top:282.3px;" width="14" height="14" viewBox="0 0 14 14"><path d="M7 1.3 L12.7 7 L7 12.7 L1.3 7 Z" fill="none" stroke="#666" stroke-width="1" stroke-linejoin="round"/><path d="M7 4.2 V8" stroke="#4a3a5a" stroke-width="1.2"/><circle cx="7" cy="9.6" r="0.6" fill="#4a3a5a"/></svg>
<svg style="position:absolute;left:183px;top:309.8px;" width="9" height="8" viewBox="0 0 9 8"><rect x="0" y="0.0" width="8.3" height="1" fill="#6f6f6f"/><rect x="0" y="2.1" width="8.3" height="1" fill="#7a7a7a"/><rect x="0" y="4.2" width="8.3" height="1" fill="#bdbdbd"/><rect x="0" y="6.3" width="8.3" height="1" fill="#c8c8c8"/></svg>
<div class="t" style="left:208.50px;top:310.68px;font-size:9px;color:#3b3b3b;font-weight:normal;transform:scaleX(0.84);transform-origin:0 0;">DP1</div>
<div class="t" style="left:253.50px;top:310.68px;font-size:9px;color:#3b3b3b;font-weight:normal;transform:scaleX(0.87);transform-origin:0 0;">PF</div>
<div class="t" style="left:281.50px;top:310.68px;font-size:9px;color:#3b3b3b;font-weight:normal;transform:scaleX(0.91);transform-origin:0 0;">03-16-2-01</div>
<div class="t" style="left:-1490.50px;width:2000px;text-align:right;top:310.68px;font-size:9px;color:#3b3b3b;font-weight:normal;transform:scaleX(0.87);transform-origin:100% 0;">724493857</div>
<div class="t" style="left:521.50px;top:310.68px;font-size:9px;color:#3b3b3b;font-weight:normal;transform:scaleX(0.84);transform-origin:0 0;">I0751B2</div>
<div class="t" style="left:581.00px;top:310.68px;font-size:9px;color:#3b3b3b;font-weight:normal;transform:scaleX(0.87);transform-origin:0 0;">00 - Livre</div>
<div class="t" style="left:751.00px;top:310.68px;font-size:9px;color:#3b3b3b;font-weight:normal;transform:scaleX(0.87);transform-origin:0 0;">0</div>
<div class="t" style="left:842.50px;top:310.68px;font-size:9px;color:#3b3b3b;font-weight:normal;transform:scaleX(0.87);transform-origin:0 0;">372448</div>
<svg style="position:absolute;left:183px;top:331.3px;" width="9" height="8" viewBox="0 0 9 8"><rect x="0" y="0.0" width="8.3" height="1" fill="#6f6f6f"/><rect x="0" y="2.1" width="8.3" height="1" fill="#7a7a7a"/><rect x="0" y="4.2" width="8.3" height="1" fill="#bdbdbd"/><rect x="0" y="6.3" width="8.3" height="1" fill="#c8c8c8"/></svg>
<div class="t" style="left:208.50px;top:332.18px;font-size:9px;color:#3b3b3b;font-weight:normal;transform:scaleX(0.84);transform-origin:0 0;">DP1</div>
<div class="t" style="left:253.50px;top:332.18px;font-size:9px;color:#3b3b3b;font-weight:normal;transform:scaleX(0.87);transform-origin:0 0;">PF</div>
<div class="t" style="left:281.50px;top:332.18px;font-size:9px;color:#3b3b3b;font-weight:normal;transform:scaleX(0.91);transform-origin:0 0;">03-16-2-01</div>
<div class="t" style="left:-1490.50px;width:2000px;text-align:right;top:332.18px;font-size:9px;color:#3b3b3b;font-weight:normal;transform:scaleX(0.87);transform-origin:100% 0;">624493856</div>
<div class="t" style="left:521.50px;top:332.18px;font-size:9px;color:#3b3b3b;font-weight:normal;transform:scaleX(0.84);transform-origin:0 0;">I0908B2</div>
<div class="t" style="left:581.00px;top:332.18px;font-size:9px;color:#3b3b3b;font-weight:normal;transform:scaleX(0.87);transform-origin:0 0;">00 - Livre</div>
<div class="t" style="left:751.00px;top:332.18px;font-size:9px;color:#3b3b3b;font-weight:normal;transform:scaleX(0.87);transform-origin:0 0;">0</div>
<div class="t" style="left:842.50px;top:332.18px;font-size:9px;color:#3b3b3b;font-weight:normal;transform:scaleX(0.87);transform-origin:0 0;">372448</div>
<svg style="position:absolute;left:183px;top:352.8px;" width="9" height="8" viewBox="0 0 9 8"><rect x="0" y="0.0" width="8.3" height="1" fill="#6f6f6f"/><rect x="0" y="2.1" width="8.3" height="1" fill="#7a7a7a"/><rect x="0" y="4.2" width="8.3" height="1" fill="#bdbdbd"/><rect x="0" y="6.3" width="8.3" height="1" fill="#c8c8c8"/></svg>
<div class="t" style="left:208.50px;top:353.68px;font-size:9px;color:#3b3b3b;font-weight:normal;transform:scaleX(0.84);transform-origin:0 0;">DP1</div>
<div class="t" style="left:253.50px;top:353.68px;font-size:9px;color:#3b3b3b;font-weight:normal;transform:scaleX(0.87);transform-origin:0 0;">PC</div>
<div class="t" style="left:281.50px;top:353.68px;font-size:9px;color:#3b3b3b;font-weight:normal;transform:scaleX(0.91);transform-origin:0 0;">05-03-1-04</div>
<div class="t" style="left:-1490.50px;width:2000px;text-align:right;top:353.68px;font-size:9px;color:#3b3b3b;font-weight:normal;transform:scaleX(0.87);transform-origin:100% 0;">324484969</div>
<div class="t" style="left:521.50px;top:353.68px;font-size:9px;color:#3b3b3b;font-weight:normal;transform:scaleX(0.84);transform-origin:0 0;">I0018B1</div>
<div class="t" style="left:581.00px;top:353.68px;font-size:9px;color:#3b3b3b;font-weight:normal;transform:scaleX(0.87);transform-origin:0 0;">00 - Livre</div>
<div class="t" style="left:751.00px;top:353.68px;font-size:9px;color:#3b3b3b;font-weight:normal;transform:scaleX(0.87);transform-origin:0 0;">0</div>
<div class="t" style="left:842.50px;top:353.68px;font-size:9px;color:#3b3b3b;font-weight:normal;transform:scaleX(0.87);transform-origin:0 0;">371842</div>
<svg style="position:absolute;left:1101px;top:350.25px;" width="14" height="14" viewBox="0 0 14 14"><circle cx="7.2" cy="7.2" r="5.2" fill="none" stroke="#3bb5aa" stroke-width="1.2"/><path d="M4.8 7.4 L6.5 8.9 L9.6 5.8" fill="none" stroke="#1fa89b" stroke-width="1.6" stroke-linecap="round" stroke-linejoin="round"/></svg>
<svg style="position:absolute;left:183px;top:374.1px;" width="9" height="8" viewBox="0 0 9 8"><rect x="0" y="0.0" width="8.3" height="1" fill="#6f6f6f"/><rect x="0" y="2.1" width="8.3" height="1" fill="#7a7a7a"/><rect x="0" y="4.2" width="8.3" height="1" fill="#bdbdbd"/><rect x="0" y="6.3" width="8.3" height="1" fill="#c8c8c8"/></svg>
<div class="t" style="left:208.50px;top:374.98px;font-size:9px;color:#3b3b3b;font-weight:normal;transform:scaleX(0.84);transform-origin:0 0;">DP1</div>
<div class="t" style="left:253.50px;top:374.98px;font-size:9px;color:#3b3b3b;font-weight:normal;transform:scaleX(0.87);transform-origin:0 0;">PC</div>
<div class="t" style="left:281.50px;top:374.98px;font-size:9px;color:#3b3b3b;font-weight:normal;transform:scaleX(0.91);transform-origin:0 0;">01-14-1-01</div>
<div class="t" style="left:-1490.50px;width:2000px;text-align:right;top:374.98px;font-size:9px;color:#3b3b3b;font-weight:normal;transform:scaleX(0.87);transform-origin:100% 0;">724493560</div>
<div class="t" style="left:521.50px;top:374.98px;font-size:9px;color:#3b3b3b;font-weight:normal;transform:scaleX(0.84);transform-origin:0 0;">I0908B2</div>
<div class="t" style="left:581.00px;top:374.98px;font-size:9px;color:#3b3b3b;font-weight:normal;transform:scaleX(0.87);transform-origin:0 0;">00 - Livre</div>
<div class="t" style="left:751.00px;top:374.98px;font-size:9px;color:#3b3b3b;font-weight:normal;transform:scaleX(0.87);transform-origin:0 0;">0</div>
<div class="t" style="left:842.50px;top:374.98px;font-size:9px;color:#3b3b3b;font-weight:normal;transform:scaleX(0.87);transform-origin:0 0;">372448</div>
<svg style="position:absolute;left:1101px;top:371.75px;" width="14" height="14" viewBox="0 0 14 14"><circle cx="7.2" cy="7.2" r="5.2" fill="none" stroke="#3bb5aa" stroke-width="1.2"/><path d="M4.8 7.4 L6.5 8.9 L9.6 5.8" fill="none" stroke="#1fa89b" stroke-width="1.6" stroke-linecap="round" stroke-linejoin="round"/></svg>
<svg style="position:absolute;left:183px;top:395.5px;" width="9" height="8" viewBox="0 0 9 8"><rect x="0" y="0.0" width="8.3" height="1" fill="#6f6f6f"/><rect x="0" y="2.1" width="8.3" height="1" fill="#7a7a7a"/><rect x="0" y="4.2" width="8.3" height="1" fill="#bdbdbd"/><rect x="0" y="6.3" width="8.3" height="1" fill="#c8c8c8"/></svg>
<div class="t" style="left:208.50px;top:396.38px;font-size:9px;color:#3b3b3b;font-weight:normal;transform:scaleX(0.84);transform-origin:0 0;">DP1</div>
<div class="t" style="left:253.50px;top:396.38px;font-size:9px;color:#3b3b3b;font-weight:normal;transform:scaleX(0.87);transform-origin:0 0;">PC</div>
<div class="t" style="left:281.50px;top:396.38px;font-size:9px;color:#3b3b3b;font-weight:normal;transform:scaleX(0.91);transform-origin:0 0;">01-14-1-01</div>
<div class="t" style="left:-1490.50px;width:2000px;text-align:right;top:396.38px;font-size:9px;color:#3b3b3b;font-weight:normal;transform:scaleX(0.87);transform-origin:100% 0;">224488650</div>
<div class="t" style="left:521.50px;top:396.38px;font-size:9px;color:#3b3b3b;font-weight:normal;transform:scaleX(0.84);transform-origin:0 0;">I0744B1</div>
<div class="t" style="left:581.00px;top:396.38px;font-size:9px;color:#3b3b3b;font-weight:normal;transform:scaleX(0.87);transform-origin:0 0;">00 - Livre</div>
<div class="t" style="left:751.00px;top:396.38px;font-size:9px;color:#3b3b3b;font-weight:normal;transform:scaleX(0.87);transform-origin:0 0;">0</div>
<div class="t" style="left:842.50px;top:396.38px;font-size:9px;color:#3b3b3b;font-weight:normal;transform:scaleX(0.87);transform-origin:0 0;">372448</div>
<svg style="position:absolute;left:1101px;top:393.25px;" width="14" height="14" viewBox="0 0 14 14"><circle cx="7.2" cy="7.2" r="5.2" fill="none" stroke="#3bb5aa" stroke-width="1.2"/><path d="M4.8 7.4 L6.5 8.9 L9.6 5.8" fill="none" stroke="#1fa89b" stroke-width="1.6" stroke-linecap="round" stroke-linejoin="round"/></svg>
<div style="left:175px;top:438px;width:994px;height:14px;background:#f9f9f9"></div>
<div style="left:174px;top:452px;width:995px;height:1px;background:#e4e4e4"></div>
<div style="left:175px;top:453px;width:994px;height:2px;background:#fcfcfc"></div>
<svg style="position:absolute;left:181px;top:440px;" width="8" height="10" viewBox="0 0 8 10"><path d="M6.5 1 L1.5 5 L6.5 9 Z" fill="#8a8a8a"/></svg>
<svg style="position:absolute;left:1155px;top:440px;" width="8" height="10" viewBox="0 0 8 10"><path d="M1.5 1 L6.5 5 L1.5 9 Z" fill="#8a8a8a"/></svg>
<div style="left:664.8px;top:441px;width:484.2px;height:8px;background:#8a8a8a;border-radius:4px"></div>
<div style="left:202px;top:220px;width:969px;height:23px;border:3px solid #ff0000;box-sizing:border-box;border-radius:2px"></div>
<div style="left:201px;top:323px;width:874px;height:25px;border:3px solid #ff0000;box-sizing:border-box;border-radius:2px"></div>
<svg style="position:absolute;left:0;top:0" width="1185" height="455"><path d="M209.3 190 L222.3 219.2" stroke="#ff0000" stroke-width="2.8" stroke-linecap="round"/><path d="M228 232 L218.5 220.9 L226.1 217.5 Z" fill="#ff0000"/></svg>
<svg style="position:absolute;left:0;top:0" width="1185" height="455"><path d="M372.6 192.1 L378.3 210.1" stroke="#ff0000" stroke-width="2.8" stroke-linecap="round"/><path d="M382.5 223.5 L374.3 211.4 L382.3 208.9 Z" fill="#ff0000"/></svg>
<svg style="position:absolute;left:0;top:0" width="1185" height="455"><path d="M733.3 190.1 L728.2 207.6" stroke="#ff0000" stroke-width="2.8" stroke-linecap="round"/><path d="M724.3 221 L724.2 206.4 L732.2 208.7 Z" fill="#ff0000"/></svg>
<svg style="position:absolute;left:0;top:0" width="1185" height="455"><path d="M950.4 191 L971.5 218.4" stroke="#ff0000" stroke-width="2.8" stroke-linecap="round"/><path d="M980 229.5 L968.1 221.0 L974.8 215.8 Z" fill="#ff0000"/></svg>
<svg style="position:absolute;left:0;top:0" width="1185" height="455"><path d="M494.5 262.7 L282.7 280.1" stroke="#ff0000" stroke-width="2.8" stroke-linecap="round"/><path d="M268.7 281.2 L282.3 275.9 L283.0 284.2 Z" fill="#ff0000"/></svg>
</body></html>
